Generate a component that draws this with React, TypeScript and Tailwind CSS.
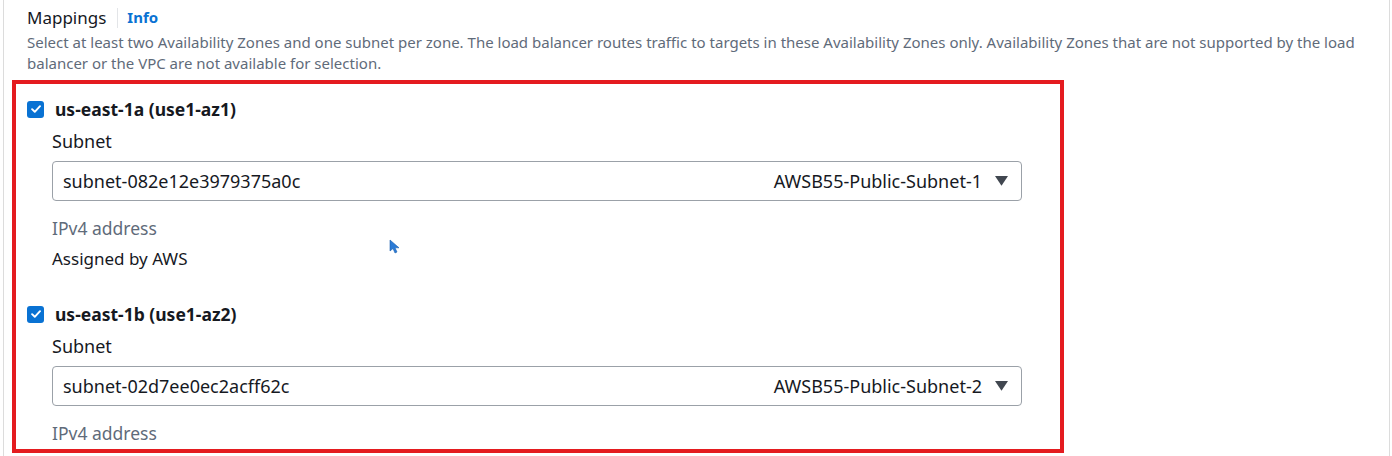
import React from "react";

const font = { fontFamily: '"Noto Sans", "Open Sans", Arial, sans-serif' };

const Check: React.FC = () => (
    <span className="flex h-[17px] w-[17px] items-center justify-center rounded-[3px] bg-[#0972d3]">
        <svg viewBox="0 0 16 16" className="h-3.5 w-3.5" fill="none">
            <path d="M3.5 8.2 6.6 11.2 12.6 4.8" stroke="white" strokeWidth="2.2" strokeLinecap="round" strokeLinejoin="round" />
        </svg>
    </span>
);

const SubnetSelect: React.FC<{ id: string; name: string }> = ({ id, name }) => (
    <div className="flex h-10 w-[970px] items-center justify-between rounded-[4px] border border-[#9ba1a8] pl-[10px] pr-[13px] text-[18px] text-[#16191f]">
        <span>{id}</span>
        <div className="flex items-center gap-[13px]">
            <span>{name}</span>
            <svg viewBox="0 0 12 10" className="h-[11px] w-[13px]">
                <path d="M0 0h12L6 9z" fill="#414750" />
            </svg>
        </div>
    </div>
);

const Zone: React.FC<{
    zone: string;
    subnetId: string;
    subnetName: string;
    showAssigned?: boolean;
}> = ({ zone, subnetId, subnetName, showAssigned }) => (
    <div>
        <div className="flex h-6 items-center gap-[11px] pl-[11px]">
            <Check />
            <span className="text-[17.5px] font-bold text-[#16191f]">{zone}</span>
        </div>
        <div className="pl-[36px]">
            <div className="mt-2 flex h-6 items-center text-[18px] text-[#16191f]">Subnet</div>
            <div className="mt-2">
                <SubnetSelect id={subnetId} name={subnetName} />
            </div>
            <div className="mt-[15px] flex h-6 items-center text-[17.5px] text-[#5f6b7a]">IPv4 address</div>
            {showAssigned && (
                <div className="mt-[7px] flex h-6 items-center text-[17px] text-[#16191f]">Assigned by AWS</div>
            )}
        </div>
    </div>
);

export default function App() {
    return (
        <div style={font} className="relative h-[456px] w-[1392px] overflow-hidden bg-white">
            <div className="ml-[3px] mr-[2px] h-full border-x border-[#dcdcdc]">
                <div className="pl-[23px]">
                    <div className="flex h-[32px] items-center pt-[3px]">
                        <span className="text-[17px] text-[#16191f]">Mappings</span>
                        <span className="ml-[11px] mr-[9px] h-[20px] w-px bg-[#e3e5e8]" />
                        <span className="text-[15px] font-bold text-[#0972d3]">Info</span>
                    </div>
                    <p className="text-[15px] leading-[21px] text-[#5f6b7a]">
                        Select at least two Availability Zones and one subnet per zone. The load balancer routes traffic to targets in these Availability Zones only. Availability Zones that are not supported by the load
                        <br />
                        balancer or the VPC are not available for selection.
                    </p>
                </div>
                <div className="ml-[8px] mt-[6px] h-[373px] w-[1052px] overflow-hidden border-4 border-[#e41b1f] pt-[13px]">
                    <Zone zone="us-east-1a (use1-az1)" subnetId="subnet-082e12e3979375a0c" subnetName="AWSB55-Public-Subnet-1" showAssigned />
                    <div className="mt-[31px]">
                        <Zone zone="us-east-1b (use1-az2)" subnetId="subnet-02d7ee0ec2acff62c" subnetName="AWSB55-Public-Subnet-2" />
                    </div>
                </div>
            </div>
            <svg viewBox="0 0 12 16" className="absolute left-[389px] top-[239px] h-[16px] w-[12px]">
                <path d="M1 1v11l3-2.5 2 4.5 2-1-2-4.2h4z" fill="#2b7bd6" stroke="#1b5fae" strokeWidth="0.6" />
            </svg>
        </div>
    );
}
